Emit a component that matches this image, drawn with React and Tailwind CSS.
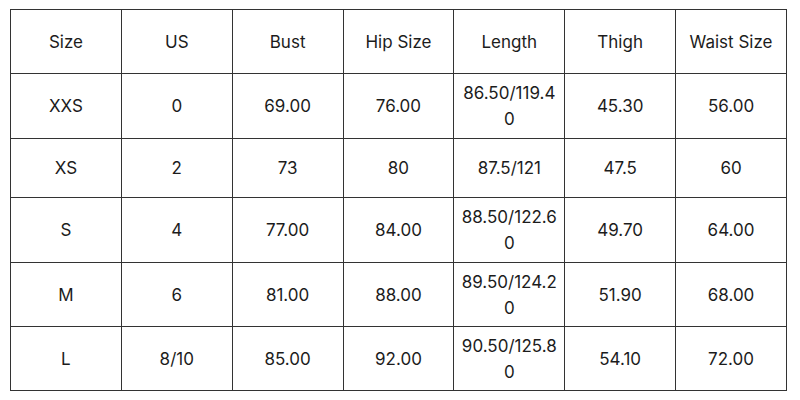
const headers = ["Size", "US", "Bust", "Hip Size", "Length", "Thigh", "Waist Size"];

const rows = [
  { h: "h-[65px]", cells: ["XXS", "0", "69.00", "76.00", "86.50/119.40", "45.30", "56.00"] },
  { h: "h-[59px]", cells: ["XS", "2", "73", "80", "87.5/121", "47.5", "60"] },
  { h: "h-[65px]", cells: ["S", "4", "77.00", "84.00", "88.50/122.60", "49.70", "64.00"] },
  { h: "h-[64px]", cells: ["M", "6", "81.00", "88.00", "89.50/124.20", "51.90", "68.00"] },
  { h: "h-[64px]", cells: ["L", "8/10", "85.00", "92.00", "90.50/125.80", "54.10", "72.00"] },
];

function Cell({ children }) {
  return (
    <td className="border border-[#333] px-[5px] text-center align-middle break-all leading-[26px]">
      {children}
    </td>
  );
}

export default function App() {
  return (
    <div className="w-[800px] h-[400px] bg-white pl-[10px] pt-[9px] font-['Inter',sans-serif] text-[17px] text-[#1c1c1c]">
      <table className="table-fixed border-collapse w-[777px]">
        <tbody>
          <tr className="h-[64px]">
            {headers.map((t) => (
              <Cell key={t}>{t}</Cell>
            ))}
          </tr>
          {rows.map((r) => (
            <tr key={r.cells[0]} className={r.h}>
              {r.cells.map((c, i) => (
                <Cell key={i}>{c}</Cell>
              ))}
            </tr>
          ))}
        </tbody>
      </table>
    </div>
  );
}
